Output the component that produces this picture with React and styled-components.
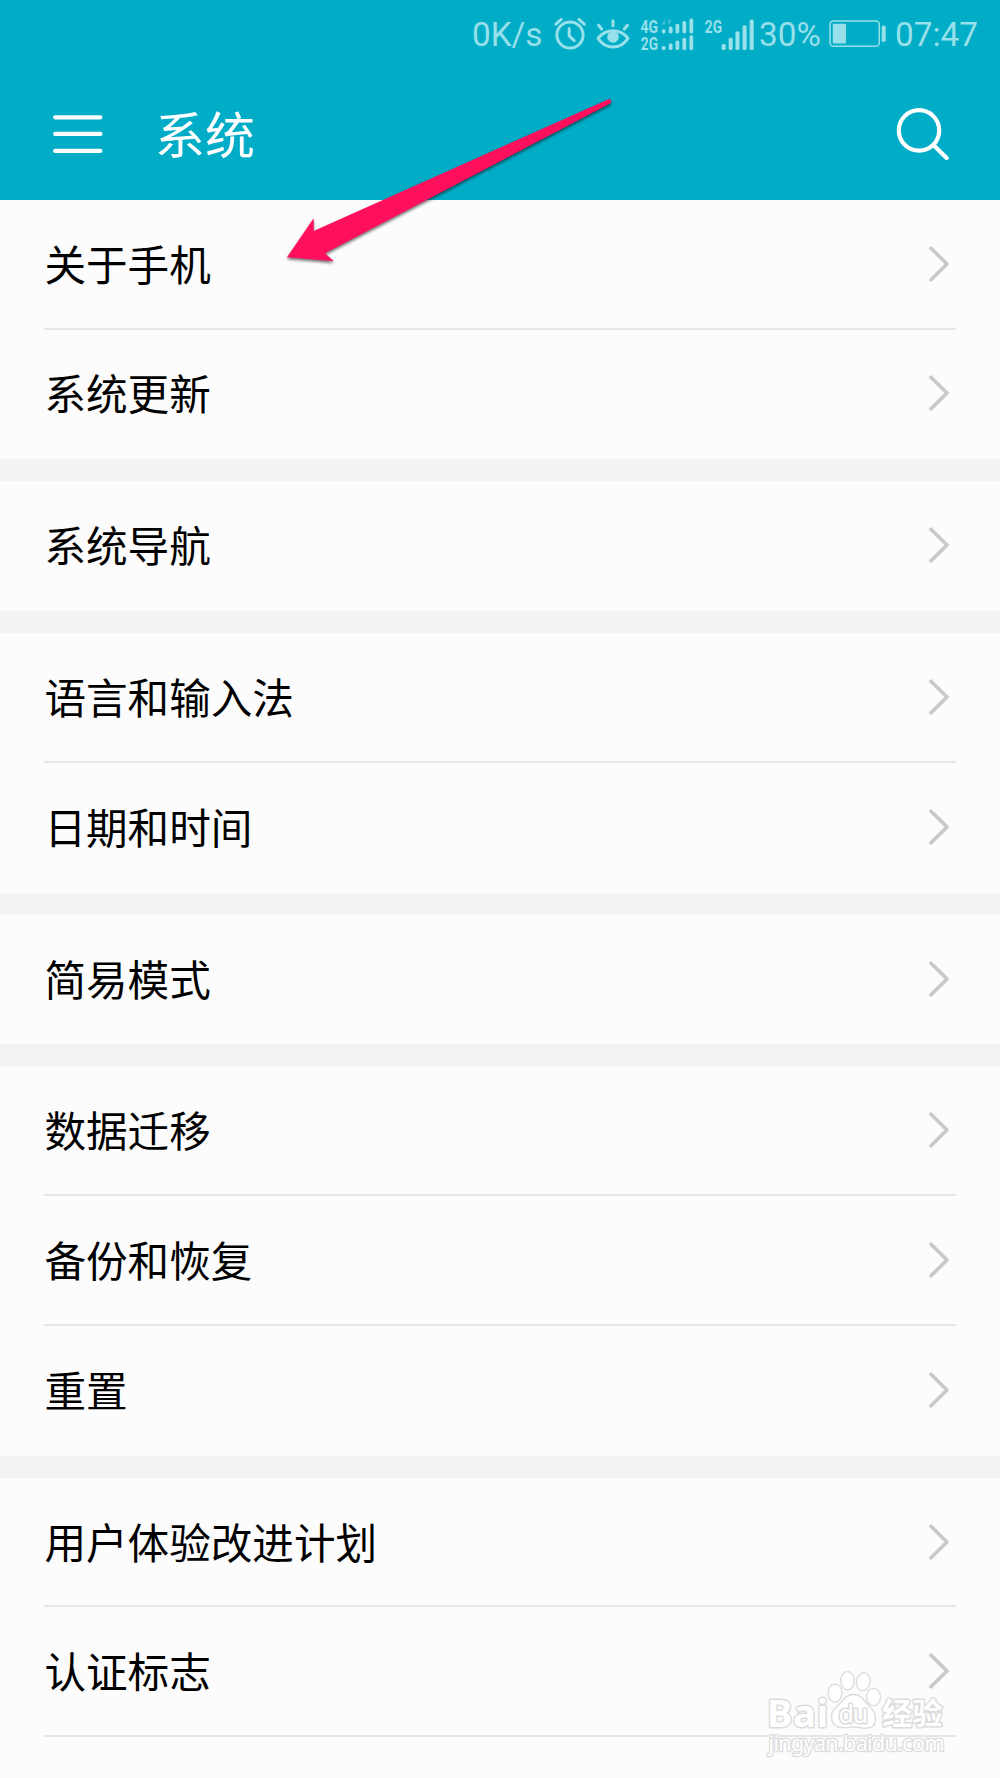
import styled, { createGlobalStyle } from "styled-components";

const sections = [
  ["关于手机", "系统更新"],
  ["系统导航"],
  ["语言和输入法", "日期和时间"],
  ["简易模式"],
  ["数据迁移", "备份和恢复", "重置"],
  ["用户体验改进计划", "认证标志", ""],
];

function Bars({ xs, tops, bottom, width }) {
  return xs.map((x, i) => (
    <rect
      key={x}
      x={x - width / 2}
      y={tops[i]}
      width={width}
      height={bottom - tops[i]}
      rx={1.6}
      fill="currentColor"
    />
  ));
}

function AlarmIcon() {
  return (
    <StatusIcon width="36" height="36" $left={8}>
      <circle cx="18" cy="19" r="13.1" />
      <path d="M17.2 12.5v7.4l5 4.7M3.9 8.2l5.4-4.8M26.9 3.4l5.4 4.8" />
    </StatusIcon>
  );
}

function EyeIcon() {
  return (
    <StatusIcon width="38" height="36" $left={6}>
      <path d="M4 22.3C8.5 16.8 13.5 14.8 19 14.8S29.5 16.8 34 22.3C30 28.3 25 31 19 31S8 28.3 4 22.3Z" />
      <path d="M19 4.8v5M4.6 9.2l3.2 4M33.4 9.2l-3.2 4" />
      <circle cx="19" cy="21" r="5.8" fill="currentColor" stroke="none" />
    </StatusIcon>
  );
}

function DualSignalIcon() {
  const xs = [25.7, 32.7, 39.4, 46.3, 53.3];
  return (
    <StatusIcon width="60" height="40" $left={6}>
      <NetLabel x="2.4" y="19.4" textLength="17.5" lengthAdjust="spacingAndGlyphs">
        4G
      </NetLabel>
      <NetLabel x="2.8" y="35.8" textLength="17.2" lengthAdjust="spacingAndGlyphs">
        2G
      </NetLabel>
      <path
        d="M23.5 10.5l4-6.5v6.5zM30 4.5v6.5l4-4z"
        fill="currentColor"
        stroke="none"
        opacity="0.35"
      />
      <g stroke="none">
        <Bars xs={xs} tops={[15.2, 12.4, 9.7, 7, 4.4]} bottom={19.4} width={3.8} />
        <Bars xs={xs} tops={[32, 29.3, 26.4, 23.8, 21.2]} bottom={36} width={3.8} />
      </g>
    </StatusIcon>
  );
}

function SignalIcon() {
  return (
    <StatusIcon width="54" height="40" $left={5}>
      <NetLabel x="1.8" y="19.2" textLength="17.2" lengthAdjust="spacingAndGlyphs">
        2G
      </NetLabel>
      <g stroke="none">
        <Bars
          xs={[20.7, 27.7, 34.5, 41.6, 48.7]}
          tops={[30, 23.7, 17.2, 11.3, 5.6]}
          bottom={36}
          width={4.1}
        />
      </g>
    </StatusIcon>
  );
}

function BatteryIcon() {
  return (
    <StatusIcon width="60" height="32" $left={6}>
      <rect x="2" y="3" width="49.3" height="25.3" rx="3.4" strokeWidth="1.5" />
      <rect x="4.8" y="5.8" width="13.2" height="19.6" rx="1" fill="currentColor" stroke="none" />
      <rect x="53.7" y="7.5" width="4" height="16.6" rx="1.8" fill="currentColor" stroke="none" />
    </StatusIcon>
  );
}

function Chevron() {
  return (
    <svg width="22" height="38" fill="none" stroke="#c9c9c9" strokeWidth="3.7" strokeLinecap="round" strokeLinejoin="round">
      <path d="M4 3.2l16 15.8L4 34.8" />
    </svg>
  );
}

function Pointer() {
  return (
    <PointerSvg width="350" height="190" viewBox="280 85 350 190">
      <path
        d="M287 257.3L313.7 218.3V231L608.5 99.2Q611.2 98.8 611.3 101.4L610.5 103.2L325 253.3L333.9 261.2Z"
        fill="#ff0f5c"
      />
    </PointerSvg>
  );
}

function Watermark() {
  return (
    <WatermarkSvg width="190" height="90" viewBox="760 1665 190 90">
      <g fill="#fff" stroke="#dcdcdc" strokeWidth="1.4">
        <ellipse cx="835" cy="1693" rx="7" ry="9" />
        <ellipse cx="847.5" cy="1680.7" rx="6.7" ry="9.2" />
        <ellipse cx="863.3" cy="1681.7" rx="6.8" ry="9" transform="rotate(12 863.3 1681.7)" />
        <ellipse cx="873.5" cy="1697" rx="7" ry="8.6" />
        <path d="M853.5 1694.5C862 1694.5 864 1701 869.5 1706.5C877 1713 879 1728 866 1728.3C861 1728.3 858 1726.5 853 1727C848 1727 843 1728.5 838.5 1727C829 1724 830 1711 837 1706.5C843 1701.5 845 1694.5 853.5 1694.5Z" />
      </g>
      <Outlined x="767" y="1726.5" fontSize="38" textLength="61" $bold>
        Bai
      </Outlined>
      <Outlined x="838.6" y="1722.5" fontSize="25" textLength="29.5" $weight={3}>
        du
      </Outlined>
      <Outlined x="882" y="1724" fontSize="30" textLength="60.5" $bold>
        经验
      </Outlined>
      <Outlined x="768.5" y="1750.8" fontSize="21.5" textLength="176" $weight={2.6}>
        jingyan.baidu.com
      </Outlined>
    </WatermarkSvg>
  );
}

function App() {
  return (
    <Screen>
      <GlobalStyle />
      <Header>
        <StatusBar>
          <StatusText $width={72}>0K/s</StatusText>
          <AlarmIcon />
          <EyeIcon />
          <DualSignalIcon />
          <SignalIcon />
          <StatusText $width={63} $left={2}>
            30%
          </StatusText>
          <BatteryIcon />
          <StatusText $width={83} $left={7}>
            07:47
          </StatusText>
        </StatusBar>
        <TitleBar>
          <svg width="52" height="42" stroke="#fff" strokeWidth="4.2" strokeLinecap="round">
            <path d="M3.2 4.3h45.2M3.2 20.9h45.2M3.2 37.9h45.2" />
          </svg>
          <Title>系统</Title>
          <svg width="54" height="54" fill="none" stroke="#fff" strokeWidth="4.2" strokeLinecap="round">
            <circle cx="24" cy="23.4" r="20.2" />
            <path d="M39 38.4l12.6 12.6" />
          </svg>
        </TitleBar>
      </Header>
      <List>
        {sections.map((rows) => (
          <Section key={rows[0]}>
            {rows.map((name, i) => (
              <Row key={name} $line={i < rows.length - 1}>
                <Label>{name}</Label>
                <Chevron />
              </Row>
            ))}
          </Section>
        ))}
      </List>
      <Pointer />
      <Watermark />
    </Screen>
  );
}

const GlobalStyle = createGlobalStyle`
  * {
    box-sizing: border-box;
  }
  body {
    margin: 0;
    background: #fcfcfc;
  }
  svg {
    display: block;
    flex-shrink: 0;
  }
`;

const Screen = styled.div`
  position: relative;
  width: 1000px;
  height: 1778px;
  overflow: hidden;
  background: #fcfcfc;
  font-family: "Noto Sans CJK SC", sans-serif;
`;

const Header = styled.header`
  height: 200px;
  background: #00acc6;
`;

const StatusBar = styled.div`
  display: flex;
  justify-content: flex-end;
  height: 68px;
  padding-right: 22px;
  align-items: center;
  color: #98e0ea;
`;

const StatusText = styled.span`
  flex: none;
  width: ${(props) => props.$width}px;
  margin-left: ${(props) => props.$left || 0}px;
  padding-top: 2px;
  font-family: Roboto, sans-serif;
  font-size: 33.3px;
  line-height: 40px;
  white-space: nowrap;
`;

const StatusIcon = styled.svg`
  margin-left: ${(props) => props.$left}px;
  fill: none;
  stroke: currentColor;
  stroke-width: 3;
  stroke-linecap: round;
  stroke-linejoin: round;
`;

const NetLabel = styled.text`
  fill: currentColor;
  stroke: none;
  font-family: Roboto, sans-serif;
  font-size: 18.5px;
  font-weight: 700;
`;

const TitleBar = styled.div`
  display: flex;
  align-items: center;
  height: 131px;
  padding: 0 51px 0 52px;
`;

const Title = styled.h1`
  flex: 1;
  margin: 0 0 0 51px;
  padding-bottom: 3px;
  color: #fff;
  font-size: 50px;
  font-weight: 400;
  line-height: 60px;
`;

const List = styled.main`
  display: flex;
  flex-direction: column;
  gap: 22.22px;
  margin-top: 0;
  background: #f3f3f3;
`;

const Section = styled.section`
  padding: 0 44.4px;
  background: #fcfcfc;
`;

const Row = styled.div`
  display: flex;
  align-items: center;
  justify-content: space-between;
  height: 129.63px;
  padding-right: 6.6px;
  border-bottom: 2px solid ${(props) => (props.$line ? "#e6e6e6" : "transparent")};
`;

const Label = styled.span`
  padding-bottom: 2px;
  color: #000;
  font-size: 41.6px;
  line-height: 50px;
`;

/* hand-drawn style arrow floating over the first row */
const PointerSvg = styled.svg`
  position: absolute;
  left: 280px;
  top: 85px;
  filter: drop-shadow(0 2px 1.5px rgba(0, 0, 0, 0.55));
`;

const WatermarkSvg = styled.svg`
  position: absolute;
  left: 760px;
  top: 1665px;
  overflow: visible;
`;

const Outlined = styled.text`
  fill: #fff;
  stroke: #dcdcdc;
  stroke-width: ${(props) => props.$weight || 3};
  stroke-linejoin: round;
  paint-order: stroke;
  font-family: "Noto Sans", "Noto Sans CJK SC", sans-serif;
  font-weight: ${(props) => (props.$bold ? 700 : 400)};
`;

export default App;
